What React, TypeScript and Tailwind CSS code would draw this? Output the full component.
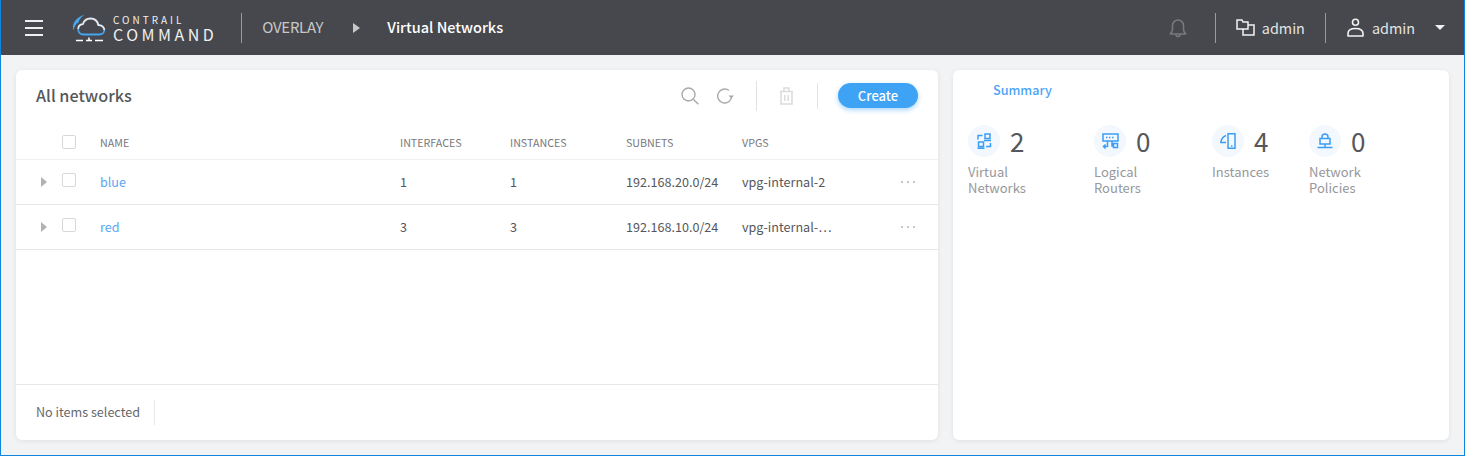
const font = "font-['Noto_Sans_CJK_JP','Noto_Sans',sans-serif]";

const rows = [
  { name: "blue", interfaces: "1", instances: "1", subnet: "192.168.20.0/24", vpg: "vpg-internal-2" },
  { name: "red", interfaces: "3", instances: "3", subnet: "192.168.10.0/24", vpg: "vpg-internal-…" },
];

function Logo() {
  return (
    <svg width="36" height="30" viewBox="0 0 36 30" fill="none" className="block">
      <path d="M2.500 16.500C.500 11 4 3.500 13.500 .800 9 4 7.800 7 7.600 8.500 5 9.500 3.200 12.500 2.500 16.500Z" fill="#4aa6ee" />
      <path
        d="M7.200 15.300C7.200 12.500 9 10.500 11.800 10.200 13 6.800 16 4.500 19.500 4.500c4 0 7 2.800 7.800 6.500 3.500 0 6 2.300 6 5"
        stroke="#e3ecf4"
        strokeWidth="1.800"
      />
      <path d="M7.200 15.300C7.200 18 9 20.500 12.500 20.500H28.300C31 20.500 33.300 18.800 33.300 16" stroke="#45a5f0" strokeWidth="1.800" />
      <path d="M5 26.500h7M15 26.500h6M24 26.500h8M18 23.500v3" stroke="#fff" strokeWidth="1.500" />
    </svg>
  );
}

function Bell() {
  return (
    <svg width="18" height="20" viewBox="0 0 18 20" fill="none" stroke="#77797d" strokeWidth="1.600" className="block">
      <path d="M1.500 15.500c1.300-1 2-2.300 2-4.500V7.500a5.500 5.500 0 0 1 11 0V11c0 2.200.7 3.500 2 4.500v.5h-15Z" strokeLinejoin="round" />
      <path d="M7 16.500c0 2.700 4 2.700 4 0" />
    </svg>
  );
}

function ProjectIcon() {
  return (
    <svg width="19" height="18" viewBox="0 0 19 18" fill="none" stroke="#f2f2f2" strokeWidth="1.500" className="block">
      <path d="M1 1h5l1 2h5v7H1Z" />
      <path d="M7 10v6h11V6h-6" />
    </svg>
  );
}

function UserIcon() {
  return (
    <svg width="17" height="19" viewBox="0 0 17 19" fill="none" stroke="#f2f2f2" strokeWidth="1.600" className="block">
      <circle cx="8.500" cy="4.200" r="3" />
      <path d="M1 18v-2.500c0-3 2.800-5 7.500-5s7.500 2 7.500 5V18Z" strokeLinejoin="round" />
    </svg>
  );
}

function Divider() {
  return <div className="h-[30px] w-px bg-[#9a9b9e]" />;
}

function TopBar() {
  return (
    <header className="flex h-[55px] shrink-0 items-center bg-[#46484d]">
      <div className="ml-[24px] flex w-[18px] flex-col gap-[5px]">
        <div className="h-[2px] bg-[#f0f0f0]" />
        <div className="h-[2px] bg-[#f0f0f0]" />
        <div className="h-[2px] bg-[#f0f0f0]" />
      </div>
      <div className="ml-[28px] mt-[2px]">
        <Logo />
      </div>
      <div className="ml-[6px] mt-[1px] flex flex-col text-[#f0f0f0]">
        <span className="text-[10px] leading-[12px] tracking-[3px]">CONTRAIL</span>
        <span className="text-[16px] leading-[16px] tracking-[3.500px]">COMMAND</span>
      </div>
      <div className="ml-[24px]">
        <Divider />
      </div>
      <span className="ml-[20px] text-[15px] tracking-[-0.3px] text-[#c8c8c8]">OVERLAY</span>
      <div className="ml-[30px] h-0 w-0 border-y-[5px] border-l-[7px] border-y-transparent border-l-[#c8c8c8]" />
      <span className="mb-[1px] ml-[27px] text-[14.500px] font-medium text-white">Virtual Networks</span>
      <div className="ml-auto mr-[28px]">
        <Bell />
      </div>
      <Divider />
      <div className="ml-[20px] mr-[7px]">
        <ProjectIcon />
      </div>
      <span className="text-[14.400px] text-[#e4e4e4]">admin</span>
      <div className="ml-[20px]">
        <Divider />
      </div>
      <div className="ml-[21px] mr-[8px]">
        <UserIcon />
      </div>
      <span className="text-[14.400px] text-[#e4e4e4]">admin</span>
      <div className="ml-[20px] mr-[19px] h-0 w-0 border-x-[5.500px] border-t-[5.500px] border-x-transparent border-t-[#f0f0f0]" />
    </header>
  );
}

function Checkbox() {
  return <div className="h-[14px] w-[14px] rounded-[2px] border border-[#d8d8d8] bg-white" />;
}

function NetworksPanel() {
  return (
    <section className="flex h-[370px] w-[922px] flex-col rounded-[6px] bg-white shadow-[0_1px_5px_rgba(0,0,0,0.08)]">
      <div className="flex h-[53px] shrink-0 items-center pb-[2px] pl-[20px] pr-[20px]">
        <h2 className="text-[16.200px] font-medium text-[#55575b]">All networks</h2>
        <svg width="18" height="18" viewBox="0 0 18 18" fill="none" stroke="#a9a9a9" strokeWidth="1.400" className="ml-auto block">
          <circle cx="7.500" cy="7.500" r="6.500" />
          <path d="m12.300 12.300 5 5" />
        </svg>
        <svg width="18" height="16" viewBox="0 0 18 16" fill="none" stroke="#a9a9a9" strokeWidth="1.400" className="ml-[17px] block">
          <path d="M15.700 8A7 7 0 1 1 13 2.500" />
          <path d="M12.500 7.500h5.500L15.300 10.500Z" fill="#a9a9a9" stroke="none" />
        </svg>
        <div className="ml-[22px] h-[30px] w-px bg-[#e2e2e2]" />
        <svg width="15" height="18" viewBox="0 0 15 18" fill="none" stroke="#dcdcdc" strokeWidth="1.500" className="ml-[22px] block">
          <path d="M1 4.500h13M2 4.500V17h11V4.500M5 4V1h5v3M5.800 8v6M9.200 8v6" />
        </svg>
        <div className="ml-[23px] h-[26px] w-px bg-[#e2e2e2]" />
        <button className="ml-[20px] h-[25px] w-[80px] rounded-full bg-[#3fa3f5] text-[13px] font-medium text-white shadow-[0_2px_5px_rgba(63,163,245,0.45)]">
          Create
        </button>
      </div>
      <div className="flex h-[37px] shrink-0 items-center border-b border-[#f0f0f0] pt-[2px] text-[10.700px] text-[#77787c]">
        <div className="w-[46px]" />
        <div className="w-[38px]">
          <Checkbox />
        </div>
        <div className="w-[300px] pt-[2px]">NAME</div>
        <div className="w-[110px] pt-[2px]">INTERFACES</div>
        <div className="w-[116px] pt-[2px]">INSTANCES</div>
        <div className="w-[116px] pt-[2px]">SUBNETS</div>
        <div className="pt-[2px]">VPGS</div>
      </div>
      {rows.map((row) => (
        <div key={row.name} className="flex h-[45px] shrink-0 items-center border-b border-[#e6e6e6] text-[12.600px] text-[#55575b]">
          <div className="w-[46px] pl-[25px]">
            <div className="h-0 w-0 border-y-[5px] border-l-[6px] border-y-transparent border-l-[#b0b2b5]" />
          </div>
          <div className="mb-[4px] w-[38px]">
            <Checkbox />
          </div>
          <div className="w-[300px] text-[#5aa6f5]">{row.name}</div>
          <div className="w-[110px]">{row.interfaces}</div>
          <div className="w-[116px]">{row.instances}</div>
          <div className="w-[116px]">{row.subnet}</div>
          <div className="w-[159px]">{row.vpg}</div>
          <div className="flex gap-[4px]">
            <div className="h-[2px] w-[2px] rounded-full bg-[#b5b5b5]" />
            <div className="h-[2px] w-[2px] rounded-full bg-[#b5b5b5]" />
            <div className="h-[2px] w-[2px] rounded-full bg-[#b5b5b5]" />
          </div>
        </div>
      ))}
      <div className="mt-auto flex h-[56px] shrink-0 items-center border-t border-[#e8e8e8] pl-[20px] text-[12.600px] text-[#66686c]">
        <span>No items selected</span>
        <div className="ml-[14px] h-[25px] w-px bg-[#e8e8e8]" />
      </div>
    </section>
  );
}

function Stat({ icon, value, label, width }: { icon: React.ReactNode; value: string; label: string[]; width: string }) {
  return (
    <div className={width}>
      <div className="flex items-center">
        <div className="flex h-[32px] w-[32px] items-center justify-center rounded-full bg-[#f3f8fe]">{icon}</div>
        <span className="ml-[10px] text-[26px] leading-[32px] text-[#55575b]">{value}</span>
      </div>
      <div className="mt-[7px] text-[13px] leading-[16px] text-[#96989c]">
        {label.map((line) => (
          <div key={line}>{line}</div>
        ))}
      </div>
    </div>
  );
}

const iconProps = { fill: "none", stroke: "#3b9df5", strokeWidth: 1.500, className: "block" };

function SummaryPanel() {
  return (
    <section className="h-[370px] w-[496px] rounded-[6px] bg-white pl-[15px] shadow-[0_1px_5px_rgba(0,0,0,0.08)]">
      <div className="pl-[25px] pt-[10px] text-[12.600px] font-medium leading-[20px] text-[#4da4f7]">Summary</div>
      <div className="mt-[25px] flex">
        <Stat
          width="w-[126px]"
          value="2"
          label={["Virtual", "Networks"]}
          icon={
            <svg width="16" height="16" viewBox="0 0 16 16" {...iconProps}>
              <path d="M9 1h5v4.500H9ZM8 7.500h7M2.500 9h5v4.500h-5ZM1.500 15.200h7M2 6.500V2.500h4.500M14.500 10v3.500H10" />
            </svg>
          }
        />
        <Stat
          width="w-[118px]"
          value="0"
          label={["Logical", "Routers"]}
          icon={
            <svg width="17" height="16" viewBox="0 0 17 16" {...iconProps}>
              <path d="M1 1h15v7H1ZM5.500 8v6M5.500 13.500H1.500M3.500 11.500l-2 2 2 2M10 8v5h1.500M11.500 10.500h4v4h-4Z" />
              <path d="M4 4.500h9" strokeDasharray="1.500 1.500" />
            </svg>
          }
        />
        <Stat
          width="w-[97px]"
          value="4"
          label={["Instances"]}
          icon={
            <svg width="16" height="16" viewBox="0 0 16 16" {...iconProps}>
              <path d="M8 .800h7v14.500H8ZM6 2.500C3 3.800 1.200 6 .800 9.500H6M11 13h1.500" />
            </svg>
          }
        />
        <Stat
          width="w-[100px]"
          value="0"
          label={["Network", "Policies"]}
          icon={
            <svg width="16" height="16" viewBox="0 0 16 16" {...iconProps}>
              <path d="M3 5.500h10v5.500H3ZM5 5.500V4a3 3 0 0 1 6 0v1.500M8 11v3.500M.500 14.500h15" />
            </svg>
          }
        />
      </div>
    </section>
  );
}

export default function App() {
  return (
    <div className={`flex h-[456px] w-full flex-col border-x border-b border-[#0f85e0] bg-[#f2f3f5] ${font}`}>
      <TopBar />
      <main className="flex gap-[15px] pl-[15px] pt-[15px]">
        <NetworksPanel />
        <SummaryPanel />
      </main>
    </div>
  );
}
